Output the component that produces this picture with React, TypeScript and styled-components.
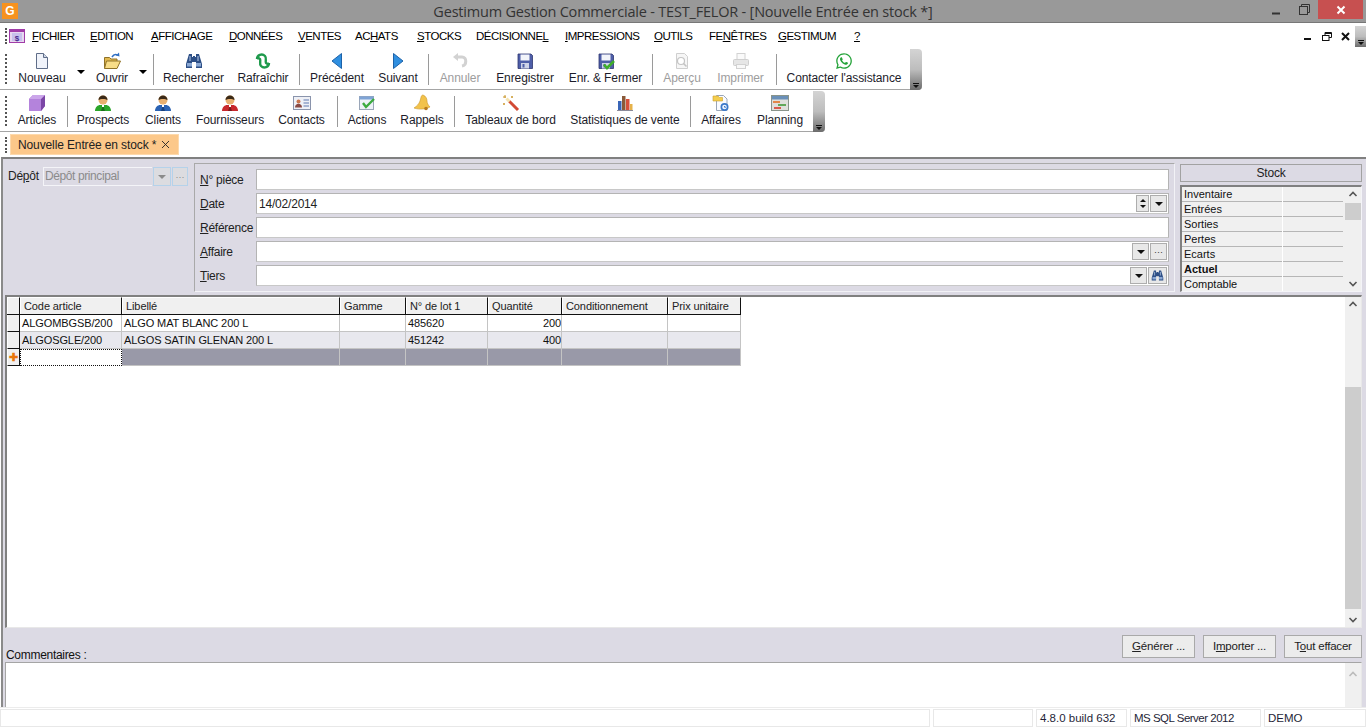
import React from 'react';
import styled, { createGlobalStyle } from 'styled-components';
import { FaWhatsapp } from 'react-icons/fa';

const GlobalStyle = createGlobalStyle`
  html, body {
    margin: 0;
    padding: 0;
    background: #fff;
    overflow: hidden;
  }
  * {
    box-sizing: border-box;
  }
`;

const UI_FONT = `"Liberation Sans", Arial, sans-serif`;

const Frame = styled.div`
  width: 1366px;
  height: 728px;
  overflow: hidden;
  display: flex;
  flex-direction: column;
  background: #fff;
  font-family: ${UI_FONT};
  font-size: 12px;
  color: #111;
`;

const TitleBar = styled.div`
  height: 23px;
  flex: none;
  display: grid;
  grid-template-columns: 1fr auto 1fr;
  background: #999;
  border-bottom: 1px solid #777;
`;

const AppLogo = styled.div`
  width: 16px;
  height: 16px;
  margin: 3px 0 0 2px;
  background: #f7921e;
  color: #fff;
  font: bold 12px "Liberation Sans", sans-serif;
  line-height: 16px;
  text-align: center;
`;

const WindowTitle = styled.div`
  font: 14.5px "Open Sans", sans-serif;
  line-height: 23px;
  color: #333;
  letter-spacing: -0.2px;
`;

const WindowButtons = styled.div`
  display: flex;
  justify-content: flex-end;
  padding-right: 3px;
`;

const WindowButton = styled.div<{ $close?: boolean }>`
  width: ${p => (p.$close ? 45 : 28)}px;
  height: 19px;
  display: flex;
  align-items: center;
  justify-content: center;
  background: ${p => (p.$close ? '#c75050' : 'transparent')};
`;

const MenuBar = styled.div`
  height: 26px;
  flex: none;
  display: flex;
  align-items: center;
`;

const Grip = styled.div<{ $h: number }>`
  width: 6px;
  height: ${p => p.$h}px;
  margin-left: 5px;
  margin-right: -1px;
  border-left: 2px dotted #555;
  flex: none;
`;

const MenuIcon = styled.div`
  width: 16px;
  height: 14px;
  margin-right: 7px;
  margin-left: -1px;
  flex: none;
`;

const MenuItem = styled.span<{ $w: number }>`
  width: ${p => p.$w}px;
  flex: none;
  font-size: 11.5px;
  letter-spacing: -0.5px;
  white-space: nowrap;
  color: #000;
`;

const MdiButtons = styled.div`
  margin-left: auto;
  display: flex;
  align-items: center;
  height: 26px;
`;

const MdiButton = styled.div`
  width: 19px;
  height: 14px;
  display: flex;
  align-items: center;
  justify-content: center;
`;

const ToolbarWrap = styled.div<{ $w: number; $mb: number }>`
  width: ${p => p.$w}px;
  height: 41px;
  flex: none;
  margin-bottom: ${p => p.$mb}px;
  display: flex;
  align-items: center;
  border-bottom: 1px solid #a5a5a5;
  border-bottom-right-radius: 4px;
`;

const ToolButton = styled.div<{ $w: number; $off?: boolean }>`
  width: ${p => p.$w}px;
  height: 40px;
  flex: none;
  display: flex;
  flex-direction: column;
  align-items: center;
  padding-top: 3px;
  color: ${p => (p.$off ? '#9d9d9d' : '#1c1c2a')};
  white-space: nowrap;
`;

const ToolIcon = styled.div`
  width: 18px;
  height: 18px;
  display: flex;
  align-items: center;
  justify-content: center;
  color: #25a33a;
`;

const ToolLabel = styled.div`
  margin-top: 1px;
  line-height: 15px;
  font-size: 12px;
  letter-spacing: -0.1px;
`;

const DropArrow = styled.div`
  width: 14px;
  height: 30px;
  flex: none;
  display: flex;
  align-items: center;
  justify-content: center;
  padding-top: 6px;
  &::after {
    content: '';
    border: 4px solid transparent;
    border-top: 4px solid #000;
    border-bottom: 0;
  }
`;

const ToolSep = styled.div`
  width: 1px;
  height: 31px;
  flex: none;
  margin: 0 3px;
  background: #9a9a9a;
`;

const Overflow = styled.div<{ $small?: boolean }>`
  width: ${p => (p.$small ? 11 : 12)}px;
  height: ${p => (p.$small ? 21 : 41)}px;
  flex: none;
  margin-left: auto;
  background: linear-gradient(#d4d4d4, #bdbdbd 50%, #6c6c6c);
  border-radius: ${p => (p.$small ? '0' : '0 4px 4px 0')};
  display: flex;
  flex-direction: column;
  align-items: center;
  justify-content: flex-end;
  padding-bottom: 2px;
  &::before {
    content: '';
    width: 6px;
    height: 1px;
    background: #111;
    margin-bottom: 1px;
  }
  &::after {
    content: '';
    border: 3px solid transparent;
    border-top: 3px solid #111;
    border-bottom: 0;
  }
`;

const TabStrip = styled.div`
  height: 25px;
  flex: none;
  display: flex;
  align-items: center;
`;

const Tab = styled.div`
  width: 169px;
  height: 21px;
  display: flex;
  align-items: center;
  gap: 5px;
  padding-left: 7px;
  background: #fcc88a;
  border: 1px solid #fdd9ac;
  color: #222;
  letter-spacing: -0.12px;
  white-space: nowrap;
`;

const Main = styled.div`
  flex: 1;
  min-height: 0;
  display: flex;
  flex-direction: column;
  background: #dcdae4;
  border-top: 2px solid #808080;
  border-left: 2px solid #8a8a8a;
  margin-left: 1px;
`;

const HeaderPanel = styled.div`
  height: 136px;
  flex: none;
  display: flex;
  padding: 4px 5px 0 5px;
`;

const DepotBlock = styled.div`
  width: 186px;
  flex: none;
  display: flex;
  align-items: flex-start;
  padding-top: 4px;
`;

const FieldLabel = styled.label<{ $w: number }>`
  width: ${p => p.$w}px;
  flex: none;
  line-height: 18px;
  font-size: 12px;
  letter-spacing: -0.25px;
  color: #222;
`;

const DisabledCombo = styled.div`
  width: 109px;
  height: 19px;
  flex: none;
  padding-left: 1px;
  line-height: 16px;
  color: #8b8b8b;
  border: 1px solid #f4f4f8;
  border-right: none;
  font-size: 12px;
  letter-spacing: -0.4px;
`;

const SmallButton = styled.div<{ $w: number; $ghost?: boolean }>`
  width: ${p => p.$w}px;
  height: ${p => (p.$ghost ? 19 : 17)}px;
  flex: none;
  display: flex;
  align-items: center;
  justify-content: center;
  background: ${p => (p.$ghost ? '#dcdce0' : '#e8e8e8')};
  border: 1px solid ${p => (p.$ghost ? '#b5d2ea' : '#adadad')};
  margin-left: 1px;
  font-size: 9px;
  color: ${p => (p.$ghost ? '#888' : '#333')};
  line-height: 10px;
`;

const DownGlyph = styled.span<{ $grey?: boolean }>`
  border: 4px solid transparent;
  border-top: 4px solid ${p => (p.$grey ? '#8b8b8b' : '#111')};
  border-bottom: 0;
`;

const SpinButton = styled.div`
  width: 13px;
  height: 17px;
  flex: none;
  display: flex;
  flex-direction: column;
  align-items: center;
  justify-content: space-evenly;
  background: #e8e8e8;
  border: 1px solid #adadad;
  &::before {
    content: '';
    border: 3px solid transparent;
    border-bottom: 3px solid #111;
    border-top: 0;
  }
  &::after {
    content: '';
    border: 3px solid transparent;
    border-top: 3px solid #111;
    border-bottom: 0;
  }
`;

const FieldGroup = styled.div`
  width: 981px;
  height: 129px;
  flex: none;
  display: flex;
  flex-direction: column;
  gap: 3px;
  padding: 5px 5px 0 5px;
  border: 1px solid #a9a9a9;
  border-right-color: #f2f2f6;
  border-bottom-color: #f2f2f6;
`;

const FieldRow = styled.div`
  height: 21px;
  display: flex;
  align-items: center;
`;

const TextField = styled.div`
  flex: 1;
  height: 21px;
  display: flex;
  align-items: center;
  justify-content: flex-end;
  padding: 0 1px 0 2px;
  background: #fff;
  border: 1px solid #b4b4b4;
  border-bottom-color: #c8c8c8;
`;

const FieldValue = styled.span`
  margin-right: auto;
  font-size: 12px;
  letter-spacing: -0.2px;
  color: #222;
`;

const StockBlock = styled.div`
  width: 182px;
  margin: 1px 0 0 5px;
  flex: none;
  display: flex;
  flex-direction: column;
`;

const StockTitle = styled.div`
  height: 18px;
  flex: none;
  text-align: center;
  line-height: 16px;
  background: #dcdae4;
  border: 1px solid #a2a2a2;
  letter-spacing: -0.2px;
  color: #222;
`;

const StockList = styled.div`
  height: 107px;
  margin-top: 3px;
  flex: none;
  display: flex;
  border: 1px solid #f4f4f8;
  border-top: 2px solid #808080;
  border-left: 2px solid #808080;
  background: #f0f0f0;
`;

const StockRows = styled.div`
  width: 161px;
  flex: none;
  overflow: hidden;
`;

const StockRow = styled.div<{ $bold?: boolean }>`
  height: 15px;
  display: grid;
  grid-template-columns: 98px 1fr;
  line-height: 15px;
  border-bottom: 1px solid #b6b6b6;
  font-size: 11px;
  font-weight: ${p => (p.$bold ? 700 : 400)};
  padding-left: 2px;
  color: #111;
  &::after {
    content: '';
    border-left: 1px solid #fff;
  }
`;

const ScrollTrack = styled.div<{ $pad: number; $bg?: string }>`
  flex: none;
  width: 16px;
  margin-left: auto;
  display: flex;
  flex-direction: column;
  background: ${p => p.$bg ?? 'transparent'};
  padding-top: ${p => p.$pad}px;
`;

const ScrollThumb = styled.div<{ $grow: number; $h: number }>`
  height: ${p => p.$h}px;
  margin-top: ${p => p.$grow}px;
  flex: none;
  background: #cdcdcd;
`;

const ScrollArrow = styled.svg<{ $end?: boolean }>`
  width: 16px;
  height: 14px;
  flex: none;
  margin-top: ${p => (p.$end ? 'auto' : '0')};
`;

const GridPanel = styled.div`
  height: 333px;
  flex: none;
  display: flex;
  background: #fff;
  border-top: 2px solid #808080;
  border-left: 2px solid #808080;
  border-bottom: 1px solid #e8e8e8;
  border-right: 1px solid #e8e8e8;
  margin-left: 2px;
  margin-right: 4px;
`;

const DataGrid = styled.div`
  width: 734px;
  flex: none;
  display: flex;
  flex-direction: column;
`;

const GridHeader = styled.div`
  height: 18px;
  display: grid;
  grid-template-columns: 13px 102px 218px 66px 82px 74px 106px 73px;
  background: #f0f0f0;
  border-bottom: 1px solid #111;
`;

const HeaderCell = styled.div`
  line-height: 16px;
  padding-left: 3px;
  font-size: 11px;
  letter-spacing: -0.1px;
  color: #222;
  white-space: nowrap;
  background: #f0f0f0;
  border-left: 1px solid #fff;
  border-top: 1px solid #fff;
  border-right: 1px solid #111;
`;

const GridRow = styled.div<{ $alt?: boolean; $new?: boolean }>`
  height: 17px;
  display: grid;
  grid-template-columns: 13px 102px 218px 66px 82px 74px 106px 73px;
  background: ${p => (p.$new ? '#9999a8' : p.$alt ? '#e8e8ee' : '#fff')};
`;

const Cell = styled.div<{ $right?: boolean }>`
  line-height: 16px;
  padding: 0 ${p => (p.$right ? 0 : 1)}px 0 2px;
  text-align: ${p => (p.$right ? 'right' : 'left')};
  font-size: 11px;
  letter-spacing: -0.1px;
  color: #111;
  white-space: nowrap;
  overflow: hidden;
  border-right: 1px solid #c4c4c4;
  border-bottom: 1px solid #c4c4c4;
`;

const RowHead = styled.div`
  background: #f0f0f0;
  border-left: 1px solid #fff;
  border-right: 1px solid #111;
  border-bottom: 1px solid #111;
  display: flex;
  align-items: center;
  justify-content: center;
  color: #e8760c;
  font-weight: 700;
  font-size: 11px;
  line-height: 10px;
`;

const NewCell = styled.div`
  background: #fff;
  border: 1px dotted #111;
`;

const BottomBar = styled.div`
  height: 34px;
  flex: none;
  display: flex;
  align-items: flex-end;
  justify-content: space-between;
  padding: 0 4px 4px 3px;
`;

const CommentLabel = styled.div`
  font-size: 12px;
  letter-spacing: -0.3px;
  line-height: 14px;
  margin-bottom: -4px;
  color: #111;
`;

const ActionButtons = styled.div`
  display: flex;
  gap: 8px;
`;

const ActionButton = styled.div<{ $w: number }>`
  width: ${p => p.$w}px;
  height: 23px;
  text-align: center;
  line-height: 21px;
  font-size: 11.5px;
  background: #ececec;
  border: 1px solid #a9a9a9;
  letter-spacing: -0.2px;
  color: #222;
`;

const CommentBox = styled.div`
  flex: 1;
  min-height: 0;
  margin: 0 4px 0 2px;
  display: flex;
  background: #fff;
  border-top: 1px solid #a5a5a5;
  border-left: 1px solid #a5a5a5;
  border-right: 1px solid #e8e8e8;
`;

const StatusBar = styled.div`
  height: 21px;
  flex: none;
  display: flex;
  gap: 3px;
  padding-top: 1px;
  border-top: 1px solid #ececec;
`;

const StatusPane = styled.div<{ $w: number; $grow?: boolean; $tight?: boolean }>`
  width: ${p => p.$w}px;
  flex: ${p => (p.$grow ? 1 : 'none')};
  height: 18px;
  border: 1px solid #e8e8e8;
  padding-left: 3px;
  line-height: 17px;
  font-size: 11.5px;
  letter-spacing: ${p => (p.$tight ? '-0.5px' : '0')};
  color: #1f1f38;
  white-space: nowrap;
`;

const GridSpacer = styled.div`
  flex: 1;
`;

/* ---- icons ---- */

const NewDocIcon = () => (
  <svg width="16" height="18" viewBox="0 0 16 18">
    <path d="M2.500 1.500h7l4 4v11h-11z" fill="#f0f3fa" stroke="#5f6d88" />
    <path d="M9.500 1.500v4h4" fill="#cfd8e8" stroke="#5f6d88" />
  </svg>
);

const FolderIcon = () => (
  <svg width="18" height="18" viewBox="0 0 18 18">
    <path d="M1.500 5.500h5l1.500 1.500h6v9h-12.500z" fill="#e2b94f" stroke="#8f7228" />
    <path d="M3.500 9h14l-3.500 7.500h-12.500z" fill="#f8dd88" stroke="#8f7228" />
    <path d="M9 5c1.500-2.500 3.500-3 5.500-2" fill="none" stroke="#2f6fc4" strokeWidth="1.600" />
    <path d="M16 .5l.5 4-3.500-1z" fill="#2f6fc4" />
  </svg>
);

const BinocularsIcon = ({ size = 18 }: { size?: number }) => (
  <svg width={size} height={size} viewBox="0 0 18 18">
    <path d="M4 2h3v3h1v-1h2v1h1v-3h3l3 10v4h-6v-6h-4v6h-6v-4z" fill="#2d4f86" />
    <rect x="2" y="11" width="5" height="3.500" fill="#8aa8d4" />
    <rect x="11" y="11" width="5" height="3.500" fill="#8aa8d4" />
    <path d="M5 4v5M13 4v5" stroke="#b8cbe8" />
  </svg>
);

const RefreshIcon = () => (
  <svg width="18" height="18" viewBox="0 0 18 18">
    <path d="M3 7c0-4 5-6 8-3 2 2 0 5 1 7 1 1 2 1 3 0" fill="none" stroke="#1f9a4c" strokeWidth="2.400" />
    <path d="M15 11c0 4-5 6-8 3-2-2 0-5-1-7-1-1-2-1-3 0" fill="none" stroke="#1f9a4c" strokeWidth="2.400" />
  </svg>
);

const ArrowIcon = ({ left }: { left?: boolean }) => (
  <svg width="12" height="16" viewBox="0 0 12 16">
    <path d={left ? 'M10.500.5v15l-9.500-7.500z' : 'M1.500.5v15l9.500-7.500z'} fill="#2f8fe0" stroke="#1d62a8" />
  </svg>
);

const UndoIcon = () => (
  <svg width="18" height="18" viewBox="0 0 18 18">
    <path d="M6 5h5c5 0 5 8 0 9" fill="none" stroke="#d2d2d2" strokeWidth="3" />
    <path d="M2 5l5-4v8z" fill="#d2d2d2" />
  </svg>
);

const FloppyIcon = ({ check }: { check?: boolean }) => (
  <svg width="18" height="18" viewBox="0 0 18 18">
    <path d="M2 2h13l1.500 1.500v13h-14.500z" fill="#4e5ea8" stroke="#2d3670" strokeWidth=".8" />
    <rect x="4.500" y="2.500" width="9" height="6" fill="#f2f4fa" />
    <rect x="5" y="11" width="8" height="5.500" fill="#cfd4e8" />
    <rect x="6.500" y="12" width="2" height="3.500" fill="#4e5ea8" />
    {check && <path d="M7 12.500l3 3.500 7-7" fill="none" stroke="#3eae2a" strokeWidth="2.600" />}
  </svg>
);

const PreviewIcon = () => (
  <svg width="18" height="18" viewBox="0 0 18 18">
    <path d="M3.500 1.500h8l3 3v12h-11z" fill="#f6f6f6" stroke="#cfcfcf" />
    <circle cx="8" cy="9" r="3.500" fill="#fff" stroke="#c4c4c4" strokeWidth="1.200" />
    <path d="M10.500 11.500l3 3" stroke="#c4c4c4" strokeWidth="1.600" />
  </svg>
);

const PrinterIcon = () => (
  <svg width="18" height="18" viewBox="0 0 18 18">
    <rect x="5" y="1.500" width="8" height="6" fill="#fafafa" stroke="#d2d2d2" />
    <rect x="1.500" y="7.500" width="15" height="6" rx="1" fill="#e6e6e6" stroke="#cfcfcf" />
    <rect x="4.500" y="12.500" width="9" height="4" fill="#f8f8f8" stroke="#d2d2d2" />
  </svg>
);

const CubeIcon = () => (
  <svg width="18" height="18" viewBox="0 0 18 18">
    <path d="M1 5l4-4h12v11l-4 5h-12z" fill="#a66ccf" />
    <path d="M1 5h12v12h-12z" fill="#b483dc" />
    <path d="M13 5l4-4v11l-4 5z" fill="#7b46a6" />
    <path d="M1 5l4-4h12l-4 4z" fill="#cba6ea" />
  </svg>
);

const PersonIcon = ({ color, dark }: { color: string; dark: string }) => (
  <svg width="18" height="18" viewBox="0 0 18 18">
    <path d="M1 17c0-4 3-6 5-6h6c2 0 5 2 5 6z" fill={color} />
    <path d="M9 11l-2 6h4z" fill={dark} />
    <path d="M8 11h2v2h-2z" fill="#fff" />
    <circle cx="9" cy="6" r="4.500" fill="#e8b070" />
    <path d="M4.500 6c0-6 9-6 9 0-2-1.500-7-1.500-9 0z" fill="#3a2a18" />
  </svg>
);

const ContactCardIcon = () => (
  <svg width="18" height="14" viewBox="0 0 18 14">
    <rect x=".5" y=".5" width="17" height="13" fill="#eef0f6" stroke="#8a94ac" />
    <circle cx="5.500" cy="5.500" r="2" fill="#c9754d" />
    <path d="M2 11.500c0-5 7-5 7 0z" fill="#8a4a44" />
    <path d="M10.500 4h5.500M10.500 7h5.500M10.500 10h5.500" stroke="#5e78b0" />
  </svg>
);

const ActionIcon = () => (
  <svg width="18" height="18" viewBox="0 0 18 18">
    <rect x="1.500" y="2.500" width="14" height="13" fill="#eef2f8" stroke="#9aa6b8" />
    <rect x="1.500" y="2.500" width="14" height="3" fill="#7fa4d6" />
    <path d="M5 9l3 4 8-8" fill="none" stroke="#3cab3f" strokeWidth="2.400" />
  </svg>
);

const BellIcon = () => (
  <svg width="18" height="18" viewBox="0 0 18 18">
    <path d="M10 1c3 1 4 4 4 6s1 4 3 6c-4 2-10 3-16 1 3-2 5-4 6-7 1-3 1-6 3-6z" fill="#f2c24a" stroke="#c9962a" strokeWidth=".6" />
    <circle cx="13" cy="14.500" r="1.800" fill="#b87a1e" />
  </svg>
);

const WandIcon = () => (
  <svg width="18" height="18" viewBox="0 0 18 18">
    <path d="M7 7l9 9" stroke="#d24a34" strokeWidth="3" />
    <path d="M4.500 4.500l3 3" stroke="#f4e3b0" strokeWidth="3" />
    <path d="M3 1v3M1 3h3M10 2v2M9 3h2M2 9v2M1 10h2" stroke="#c9962a" />
  </svg>
);

const ChartIcon = () => (
  <svg width="18" height="18" viewBox="0 0 18 18">
    <rect x="2" y="7" width="3.500" height="9" fill="#3a66b8" />
    <rect x="6" y="2" width="3.500" height="14" fill="#8a5a3a" />
    <rect x="10" y="5" width="3.500" height="11" fill="#d6503c" />
    <rect x="14" y="10" width="2.500" height="6" fill="#e6b24a" />
    <path d="M1 16.500h16" stroke="#8a8a9a" />
  </svg>
);

const AffairIcon = () => (
  <svg width="18" height="18" viewBox="0 0 18 18">
    <path d="M4.500 1.500h7l3.500 3.500v11.500h-10.500z" fill="#fafbff" stroke="#9aa6b8" />
    <path d="M1 2h5l1.500 1.500h3v3.500h-9.500z" fill="#f4ce4e" stroke="#c9a030" strokeWidth=".6" />
    <circle cx="12.500" cy="13" r="4" fill="#3a78c9" />
    <circle cx="12.500" cy="13" r="2.300" fill="#eef4ff" />
    <path d="M12.500 12v1.200h1.500" stroke="#3a78c9" fill="none" />
  </svg>
);

const PlanningIcon = () => (
  <svg width="18" height="16" viewBox="0 0 18 16">
    <rect x=".5" y=".5" width="17" height="15" fill="#e0e0dc" stroke="#8a948a" />
    <rect x="1" y="1" width="16" height="3.500" fill="#6a90b8" />
    <rect x="2" y="6" width="7" height="2" fill="#e2874a" />
    <rect x="7" y="9" width="8" height="2" fill="#63a85a" />
    <rect x="3" y="12" width="7" height="2" fill="#d85c4c" />
  </svg>
);

const MenuLogo = () => (
  <svg width="16" height="14" viewBox="0 0 16 14">
    <rect x=".5" y=".5" width="15" height="13" fill="#e8d8f0" stroke="#a03ca8" />
    <rect x="1" y="1" width="14" height="2" fill="#a03ca8" />
    <rect x="3" y="4" width="10" height="8" fill="#c8c0ec" />
    <text x="8" y="11.500" fontSize="8" fontWeight="700" fontFamily="Liberation Sans" textAnchor="middle" fill="#4a2a90">$</text>
  </svg>
);

const TabClose = () => (
  <svg width="9" height="9" viewBox="0 0 9 9">
    <path d="M1 1l7 7M8 1l-7 7" stroke="#222" strokeWidth=".9" />
  </svg>
);

const ChevronUp = () => (
  <ScrollArrow viewBox="0 0 16 14">
    <path d="M4.500 9l3.500-3.500 3.500 3.500" fill="none" stroke="#555" strokeWidth="1.600" />
  </ScrollArrow>
);

const ChevronDown = () => (
  <ScrollArrow $end viewBox="0 0 16 14">
    <path d="M4.500 5l3.500 3.500 3.500-3.500" fill="none" stroke="#555" strokeWidth="1.600" />
  </ScrollArrow>
);

const ChevronUpFaded = () => (
  <ScrollArrow viewBox="0 0 16 14">
    <path d="M4.500 9l3.500-3.500 3.500 3.500" fill="none" stroke="#bbb" strokeWidth="1.600" />
  </ScrollArrow>
);

/* ---- data ---- */

type MenuEntry = { before: string; key: string; after: string; w: number };

const menus: MenuEntry[] = [
  { before: '', key: 'F', after: 'ICHIER', w: 58 },
  { before: '', key: 'E', after: 'DITION', w: 61 },
  { before: '', key: 'A', after: 'FFICHAGE', w: 78 },
  { before: '', key: 'D', after: 'ONNÉES', w: 69 },
  { before: '', key: 'V', after: 'ENTES', w: 57 },
  { before: 'AC', key: 'H', after: 'ATS', w: 62 },
  { before: '', key: 'S', after: 'TOCKS', w: 59 },
  { before: 'DÉCISIONNE', key: 'L', after: '', w: 89 },
  { before: '', key: 'I', after: 'MPRESSIONS', w: 89 },
  { before: '', key: 'O', after: 'UTILS', w: 55 },
  { before: 'FE', key: 'N', after: 'ÊTRES', w: 69 },
  { before: '', key: 'G', after: 'ESTIMUM', w: 76 },
  { before: '', key: '?', after: '', w: 12 },
];

const stockRows = ['Inventaire', 'Entrées', 'Sorties', 'Pertes', 'Ecarts', 'Actuel', 'Comptable'];

const gridRows = [
  ['ALGOMBGSB/200', 'ALGO MAT BLANC 200 L', '', '485620', '200', '', ''],
  ['ALGOSGLE/200', 'ALGOS SATIN GLENAN 200 L', '', '451242', '400', '', ''],
];

const gridHeaders = ['Code article', 'Libellé', 'Gamme', 'N° de lot 1', 'Quantité', 'Conditionnement', 'Prix unitaire'];

const App: React.FC = () => {
  return (
    <>
      <GlobalStyle />
      <Frame>
        <TitleBar>
          <AppLogo>G</AppLogo>
          <WindowTitle>Gestimum Gestion Commerciale - TEST_FELOR - [Nouvelle Entrée en stock *]</WindowTitle>
          <WindowButtons>
            <WindowButton>
              <svg width="10" height="10" viewBox="0 0 10 10"><path d="M1 8.500h8" stroke="#333" strokeWidth="2" /></svg>
            </WindowButton>
            <WindowButton>
              <svg width="11" height="11" viewBox="0 0 11 11">
                <rect x=".5" y="2.500" width="8" height="8" fill="none" stroke="#333" />
                <path d="M2.500 2.500v-2h8v8h-2" fill="none" stroke="#333" />
              </svg>
            </WindowButton>
            <WindowButton $close>
              <svg width="10" height="10" viewBox="0 0 10 10"><path d="M1.500 1.500l7 7M8.500 1.500l-7 7" stroke="#fff" strokeWidth="2" /></svg>
            </WindowButton>
          </WindowButtons>
        </TitleBar>

        <MenuBar>
          <Grip $h={16} />
          <MenuIcon><MenuLogo /></MenuIcon>
          {menus.map(m => (
            <MenuItem key={m.key + m.after} $w={m.w}>
              {m.before}<u>{m.key}</u>{m.after}
            </MenuItem>
          ))}
          <MdiButtons>
            <MdiButton>
              <svg width="8" height="8" viewBox="0 0 8 8"><path d="M0 7h7" stroke="#111" strokeWidth="2" /></svg>
            </MdiButton>
            <MdiButton>
              <svg width="10" height="9" viewBox="0 0 10 9">
                <rect x=".5" y="3.500" width="6.500" height="5" fill="#fff" stroke="#111" />
                <path d="M3 3v-2.500h6.500v5h-2.500M3 1.500h6.500" fill="none" stroke="#111" />
              </svg>
            </MdiButton>
            <MdiButton>
              <svg width="9" height="9" viewBox="0 0 9 9"><path d="M1 1l7 7M8 1l-7 7" stroke="#111" strokeWidth="2" /></svg>
            </MdiButton>
            <Overflow $small />
          </MdiButtons>
        </MenuBar>

        <ToolbarWrap $w={922} $mb={1}>
          <Grip $h={30} />
          <ToolButton $w={64}><ToolIcon><NewDocIcon /></ToolIcon><ToolLabel>Nouveau</ToolLabel></ToolButton>
          <DropArrow />
          <ToolButton $w={48}><ToolIcon><FolderIcon /></ToolIcon><ToolLabel>Ouvrir</ToolLabel></ToolButton>
          <DropArrow />
          <ToolSep />
          <ToolButton $w={73}><ToolIcon><BinocularsIcon /></ToolIcon><ToolLabel>Rechercher</ToolLabel></ToolButton>
          <ToolButton $w={66}><ToolIcon><RefreshIcon /></ToolIcon><ToolLabel>Rafraîchir</ToolLabel></ToolButton>
          <ToolSep />
          <ToolButton $w={68}><ToolIcon><ArrowIcon left /></ToolIcon><ToolLabel>Précédent</ToolLabel></ToolButton>
          <ToolButton $w={54}><ToolIcon><ArrowIcon /></ToolIcon><ToolLabel>Suivant</ToolLabel></ToolButton>
          <ToolSep />
          <ToolButton $w={56} $off><ToolIcon><UndoIcon /></ToolIcon><ToolLabel>Annuler</ToolLabel></ToolButton>
          <ToolButton $w={74}><ToolIcon><FloppyIcon /></ToolIcon><ToolLabel>Enregistrer</ToolLabel></ToolButton>
          <ToolButton $w={87}><ToolIcon><FloppyIcon check /></ToolIcon><ToolLabel>Enr. &amp; Fermer</ToolLabel></ToolButton>
          <ToolSep />
          <ToolButton $w={52} $off><ToolIcon><PreviewIcon /></ToolIcon><ToolLabel>Aperçu</ToolLabel></ToolButton>
          <ToolButton $w={65} $off><ToolIcon><PrinterIcon /></ToolIcon><ToolLabel>Imprimer</ToolLabel></ToolButton>
          <ToolSep />
          <ToolButton $w={128}><ToolIcon><FaWhatsapp size={18} /></ToolIcon><ToolLabel>Contacter l'assistance</ToolLabel></ToolButton>
          <Overflow />
        </ToolbarWrap>

        <ToolbarWrap $w={825} $mb={0}>
          <Grip $h={30} />
          <ToolButton $w={54}><ToolIcon><CubeIcon /></ToolIcon><ToolLabel>Articles</ToolLabel></ToolButton>
          <ToolSep />
          <ToolButton $w={64}><ToolIcon><PersonIcon color="#2aa52a" dark="#1c6e1c" /></ToolIcon><ToolLabel>Prospects</ToolLabel></ToolButton>
          <ToolButton $w={56}><ToolIcon><PersonIcon color="#2a62b4" dark="#18407c" /></ToolIcon><ToolLabel>Clients</ToolLabel></ToolButton>
          <ToolButton $w={78}><ToolIcon><PersonIcon color="#c8282c" dark="#7c1a1c" /></ToolIcon><ToolLabel>Fournisseurs</ToolLabel></ToolButton>
          <ToolButton $w={65}><ToolIcon><ContactCardIcon /></ToolIcon><ToolLabel>Contacts</ToolLabel></ToolButton>
          <ToolSep />
          <ToolButton $w={52}><ToolIcon><ActionIcon /></ToolIcon><ToolLabel>Actions</ToolLabel></ToolButton>
          <ToolButton $w={58}><ToolIcon><BellIcon /></ToolIcon><ToolLabel>Rappels</ToolLabel></ToolButton>
          <ToolSep />
          <ToolButton $w={105}><ToolIcon><WandIcon /></ToolIcon><ToolLabel>Tableaux de bord</ToolLabel></ToolButton>
          <ToolButton $w={124}><ToolIcon><ChartIcon /></ToolIcon><ToolLabel>Statistiques de vente</ToolLabel></ToolButton>
          <ToolSep />
          <ToolButton $w={54}><ToolIcon><AffairIcon /></ToolIcon><ToolLabel>Affaires</ToolLabel></ToolButton>
          <ToolButton $w={64}><ToolIcon><PlanningIcon /></ToolIcon><ToolLabel>Planning</ToolLabel></ToolButton>
          <Overflow />
        </ToolbarWrap>

        <TabStrip>
          <Grip $h={16} />
          <Tab>Nouvelle Entrée en stock * <TabClose /></Tab>
        </TabStrip>

        <Main>
          <HeaderPanel>
            <DepotBlock>
              <FieldLabel $w={35}>Dé<u>p</u>ôt</FieldLabel>
              <DisabledCombo>Dépôt principal</DisabledCombo>
              <SmallButton $w={18} $ghost><DownGlyph $grey /></SmallButton>
              <SmallButton $w={16} $ghost>···</SmallButton>
            </DepotBlock>
            <FieldGroup>
              <FieldRow>
                <FieldLabel $w={56}><u>N</u>° pièce</FieldLabel>
                <TextField />
              </FieldRow>
              <FieldRow>
                <FieldLabel $w={56}><u>D</u>ate</FieldLabel>
                <TextField>
                  <FieldValue>14/02/2014</FieldValue>
                  <SpinButton />
                  <SmallButton $w={17}><DownGlyph /></SmallButton>
                </TextField>
              </FieldRow>
              <FieldRow>
                <FieldLabel $w={56}><u>R</u>éférence</FieldLabel>
                <TextField />
              </FieldRow>
              <FieldRow>
                <FieldLabel $w={56}><u>A</u>ffaire</FieldLabel>
                <TextField>
                  <SmallButton $w={17}><DownGlyph /></SmallButton>
                  <SmallButton $w={17}>···</SmallButton>
                </TextField>
              </FieldRow>
              <FieldRow>
                <FieldLabel $w={56}><u>T</u>iers</FieldLabel>
                <TextField>
                  <SmallButton $w={17}><DownGlyph /></SmallButton>
                  <SmallButton $w={19}><BinocularsIcon size={13} /></SmallButton>
                </TextField>
              </FieldRow>
            </FieldGroup>
            <StockBlock>
              <StockTitle>Stock</StockTitle>
              <StockList>
                <StockRows>
                  {stockRows.map(r => (
                    <StockRow key={r} $bold={r === 'Actuel'}>{r}</StockRow>
                  ))}
                </StockRows>
                <ScrollTrack $pad={0}>
                  <ChevronUp />
                  <ScrollThumb $grow={2} $h={17} />
                  <ChevronDown />
                </ScrollTrack>
              </StockList>
            </StockBlock>
          </HeaderPanel>

          <GridPanel>
            <DataGrid>
              <GridHeader>
                <HeaderCell />
                {gridHeaders.map(h => <HeaderCell key={h}>{h}</HeaderCell>)}
              </GridHeader>
              {gridRows.map((row, i) => (
                <GridRow key={row[0]} $alt={i === 1}>
                  <RowHead />
                  {row.map((c, j) => <Cell key={j} $right={j === 4}>{c}</Cell>)}
                </GridRow>
              ))}
              <GridRow $new>
                <RowHead>✚</RowHead>
                <NewCell />
                {gridHeaders.slice(1).map(h => <Cell key={h} />)}
              </GridRow>
            </DataGrid>
            <GridSpacer />
            <ScrollTrack $pad={0} $bg="#f0f0f0">
              <ChevronUp />
              <ScrollThumb $grow={76} $h={222} />
              <ChevronDown />
            </ScrollTrack>
          </GridPanel>

          <BottomBar>
            <CommentLabel>Commentaires :</CommentLabel>
            <ActionButtons>
              <ActionButton $w={73}><u>G</u>énérer ...</ActionButton>
              <ActionButton $w={73}>I<u>m</u>porter ...</ActionButton>
              <ActionButton $w={78}>T<u>o</u>ut effacer</ActionButton>
            </ActionButtons>
          </BottomBar>

          <CommentBox>
            <GridSpacer />
            <ScrollTrack $pad={4} $bg="#f0f0f0">
              <ChevronUpFaded />
            </ScrollTrack>
          </CommentBox>
        </Main>

        <StatusBar>
          <StatusPane $w={930} />
          <StatusPane $w={100} />
          <StatusPane $w={91}>4.8.0 build 632</StatusPane>
          <StatusPane $w={131} $tight>MS SQL Server 2012</StatusPane>
          <StatusPane $w={0} $grow>DEMO</StatusPane>
        </StatusBar>
      </Frame>
    </>
  );
};

export default App;
